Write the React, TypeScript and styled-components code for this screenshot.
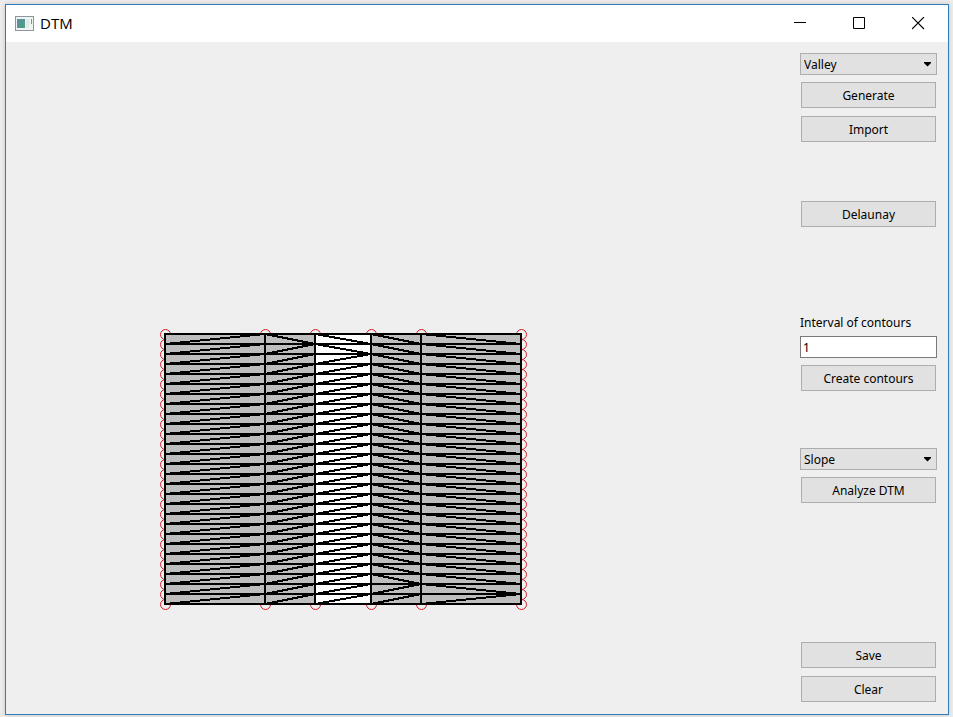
import React from "react";
import styled, { createGlobalStyle } from "styled-components";

const GlobalStyle = createGlobalStyle`
  *, *::before, *::after { box-sizing: border-box; }
  html, body { margin: 0; }
  body {
    background: #eeecea;
    color: #000;
    font: 12px/16px "Noto Sans", Tahoma, sans-serif;
  }
`;

const Desktop = styled.div`
  display: flex;
  min-height: 100vh;
  padding: 4px 4px 2px 5px;
`;

const Window = styled.div`
  flex: 1;
  display: flex;
  flex-direction: column;
  border: 1px solid #2f7dbd;
  background: #efefef;
  box-shadow: 0 0 4px #c4c4c4;
`;

const TitleBar = styled.header`
  display: flex;
  align-items: center;
  height: 37px;
  padding-left: 9px;
  background: #fff;
`;

const Title = styled.h1`
  flex: 1;
  margin: 0 0 0 6px;
  padding-bottom: 2px;
  font: 400 15px/20px "Open Sans", "Noto Sans", sans-serif;
`;

const CaptionButtons = styled.div`
  display: flex;
`;

const CaptionButton = styled.button`
  display: grid;
  place-items: center;
  width: 59px;
  height: 34px;
  padding: 0;
  border: 0;
  background: transparent;
  &:hover { background: #e5e5e5; }
`;

const Body = styled.div`
  flex: 1;
  display: flex;
`;

const Canvas = styled.main`
  flex: 1;
  min-width: 0;
  padding: 286px 0 0 153px;
`;

const Drawing = styled.svg`
  display: block;
`;

const Panel = styled.aside`
  display: flex;
  flex-direction: column;
  width: 137px;
  margin: 11px 11px 12px 0;
`;

const Group = styled.section<{ $space?: number; $bottom?: boolean }>`
  display: flex;
  flex-direction: column;
  gap: 8px;
  margin-top: ${(p) => (p.$bottom ? "auto" : `${p.$space ?? 0}px`)};
`;

const Field = styled.div`
  position: relative;
  display: flex;
  flex-direction: column;
  margin-bottom: -1px;
`;

const Select = styled.select`
  appearance: none;
  height: 22px;
  padding: 1px 20px 0 3px;
  border: 1px solid #adadad;
  border-radius: 0;
  background: #e1e1e1;
  color: inherit;
  font: inherit;
`;

const Arrow = styled.svg`
  position: absolute;
  right: 5px;
  top: 9px;
  pointer-events: none;
`;

const Label = styled.label`
  margin-bottom: 5px;
`;

const TextInput = styled.input`
  width: 100%;
  height: 22px;
  padding: 1px 2px 0;
  border: 1px solid #7a7a7a;
  background: #fff;
  color: inherit;
  font: inherit;
`;

const Button = styled.button`
  height: 26px;
  margin: 0 1px;
  padding: 1px 0 0;
  border: 1px solid #adadad;
  background: #e1e1e1;
  color: inherit;
  font: inherit;
  &:hover { border-color: #0078d7; background: #e5f1fb; }
`;

const columns = [6, 106, 156, 212, 262, 362];
const top = 6;
const step = 10;
const rows = 27;
const bottom = top + step * rows;

// Index of the row where each strip's diagonals switch direction from falling to rising.
const strips = [
  { fill: "#bebebe", flip: 0 },
  { fill: "#bebebe", flip: 1 },
  { fill: "#ffffff", flip: 2 },
  { fill: "#bebebe", flip: 25 },
  { fill: "#bebebe", flip: 26 },
];

function Terrain() {
  const levels = Array.from({ length: rows + 1 }, (_, i) => top + i * step);
  const points = levels.flatMap((y) => columns.map((x) => ({ x, y })));
  return (
    <Drawing width="368" height="282" viewBox="0 0 368 282" role="img" aria-label="Triangulated terrain">
      <g fill="none" stroke="#d21f2b" strokeWidth="1">
        {points.map(({ x, y }) => (
          <circle key={`${x}-${y}`} cx={x + 0.5} cy={y + 0.5} r="5" />
        ))}
      </g>
      <g shapeRendering="crispEdges">
        {strips.map((s, i) => (
          <rect key={i} x={columns[i]} y={top} width={columns[i + 1] - columns[i]} height={bottom - top} fill={s.fill} />
        ))}
        <g stroke="#000" strokeWidth="2" strokeLinecap="square">
          {levels.map((y) => (
            <line key={y} x1={columns[0]} x2={columns[5]} y1={y} y2={y} />
          ))}
          {columns.map((x) => (
            <line key={x} x1={x} x2={x} y1={top} y2={bottom} />
          ))}
        </g>
        <g stroke="#000" strokeWidth="2">
          {strips.map((s, i) =>
            levels.slice(0, rows).map((y, r) => {
              const falling = r < s.flip;
              return (
                <line
                  key={`${i}-${r}`}
                  x1={columns[i]}
                  y1={falling ? y : y + step}
                  x2={columns[i + 1]}
                  y2={falling ? y + step : y}
                />
              );
            })
          )}
        </g>
      </g>
    </Drawing>
  );
}

function AppIcon() {
  return (
    <svg width="19" height="15" viewBox="0 0 19 15" aria-hidden="true">
      <defs>
        <linearGradient id="screen" x1="0" y1="0" x2="1" y2="1">
          <stop offset="0" stopColor="#5b8fa5" />
          <stop offset="1" stopColor="#4f9f78" />
        </linearGradient>
      </defs>
      <rect x="0.5" y="0.5" width="18" height="14" fill="#f0f3f3" stroke="#8c969c" />
      <rect x="2" y="3" width="8" height="9" fill="url(#screen)" />
      <rect x="11" y="3" width="3" height="9" fill="#dfe9e7" />
      <rect x="16" y="3" width="1" height="5" fill="#6b9a98" />
    </svg>
  );
}

function Choice({ label, options }: { label: string; options: string[] }) {
  return (
    <Field>
      <Select aria-label={label}>
        {options.map((o) => (
          <option key={o}>{o}</option>
        ))}
      </Select>
      <Arrow width="9" height="5" viewBox="0 0 9 5" aria-hidden="true">
        <path d="M1 0h7v1L4.5 4.5 1 1z" />
      </Arrow>
    </Field>
  );
}

export default function App() {
  return (
    <>
      <GlobalStyle />
      <Desktop>
        <Window>
          <TitleBar>
            <AppIcon />
            <Title>DTM</Title>
            <CaptionButtons>
              <CaptionButton aria-label="Minimize">
                <svg width="13" height="13" viewBox="0 0 13 13"><path d="M0 5.5h12" stroke="#000" /></svg>
              </CaptionButton>
              <CaptionButton aria-label="Maximize">
                <svg width="13" height="13" viewBox="0 0 13 13"><path d="M.5.5h11v11H.5z" fill="none" stroke="#000" /></svg>
              </CaptionButton>
              <CaptionButton aria-label="Close">
                <svg width="13" height="13" viewBox="0 0 13 13"><path d="M0 0l12 12M12 0L0 12" stroke="#000" strokeWidth="1.1" /></svg>
              </CaptionButton>
            </CaptionButtons>
          </TitleBar>
          <Body>
            <Canvas>
              <Terrain />
            </Canvas>
            <Panel>
              <Group>
                <Choice label="Terrain shape" options={["Valley"]} />
                <Button>Generate</Button>
                <Button>Import</Button>
              </Group>
              <Group $space={59}>
                <Button>Delaunay</Button>
              </Group>
              <Group $space={88}>
                <Field>
                  <Label htmlFor="interval">Interval of contours</Label>
                  <TextInput id="interval" defaultValue="1" />
                </Field>
                <Button>Create contours</Button>
              </Group>
              <Group $space={57}>
                <Choice label="Analysis" options={["Slope"]} />
                <Button>Analyze DTM</Button>
              </Group>
              <Group $bottom>
                <Button>Save</Button>
                <Button>Clear</Button>
              </Group>
            </Panel>
          </Body>
        </Window>
      </Desktop>
    </>
  );
}
